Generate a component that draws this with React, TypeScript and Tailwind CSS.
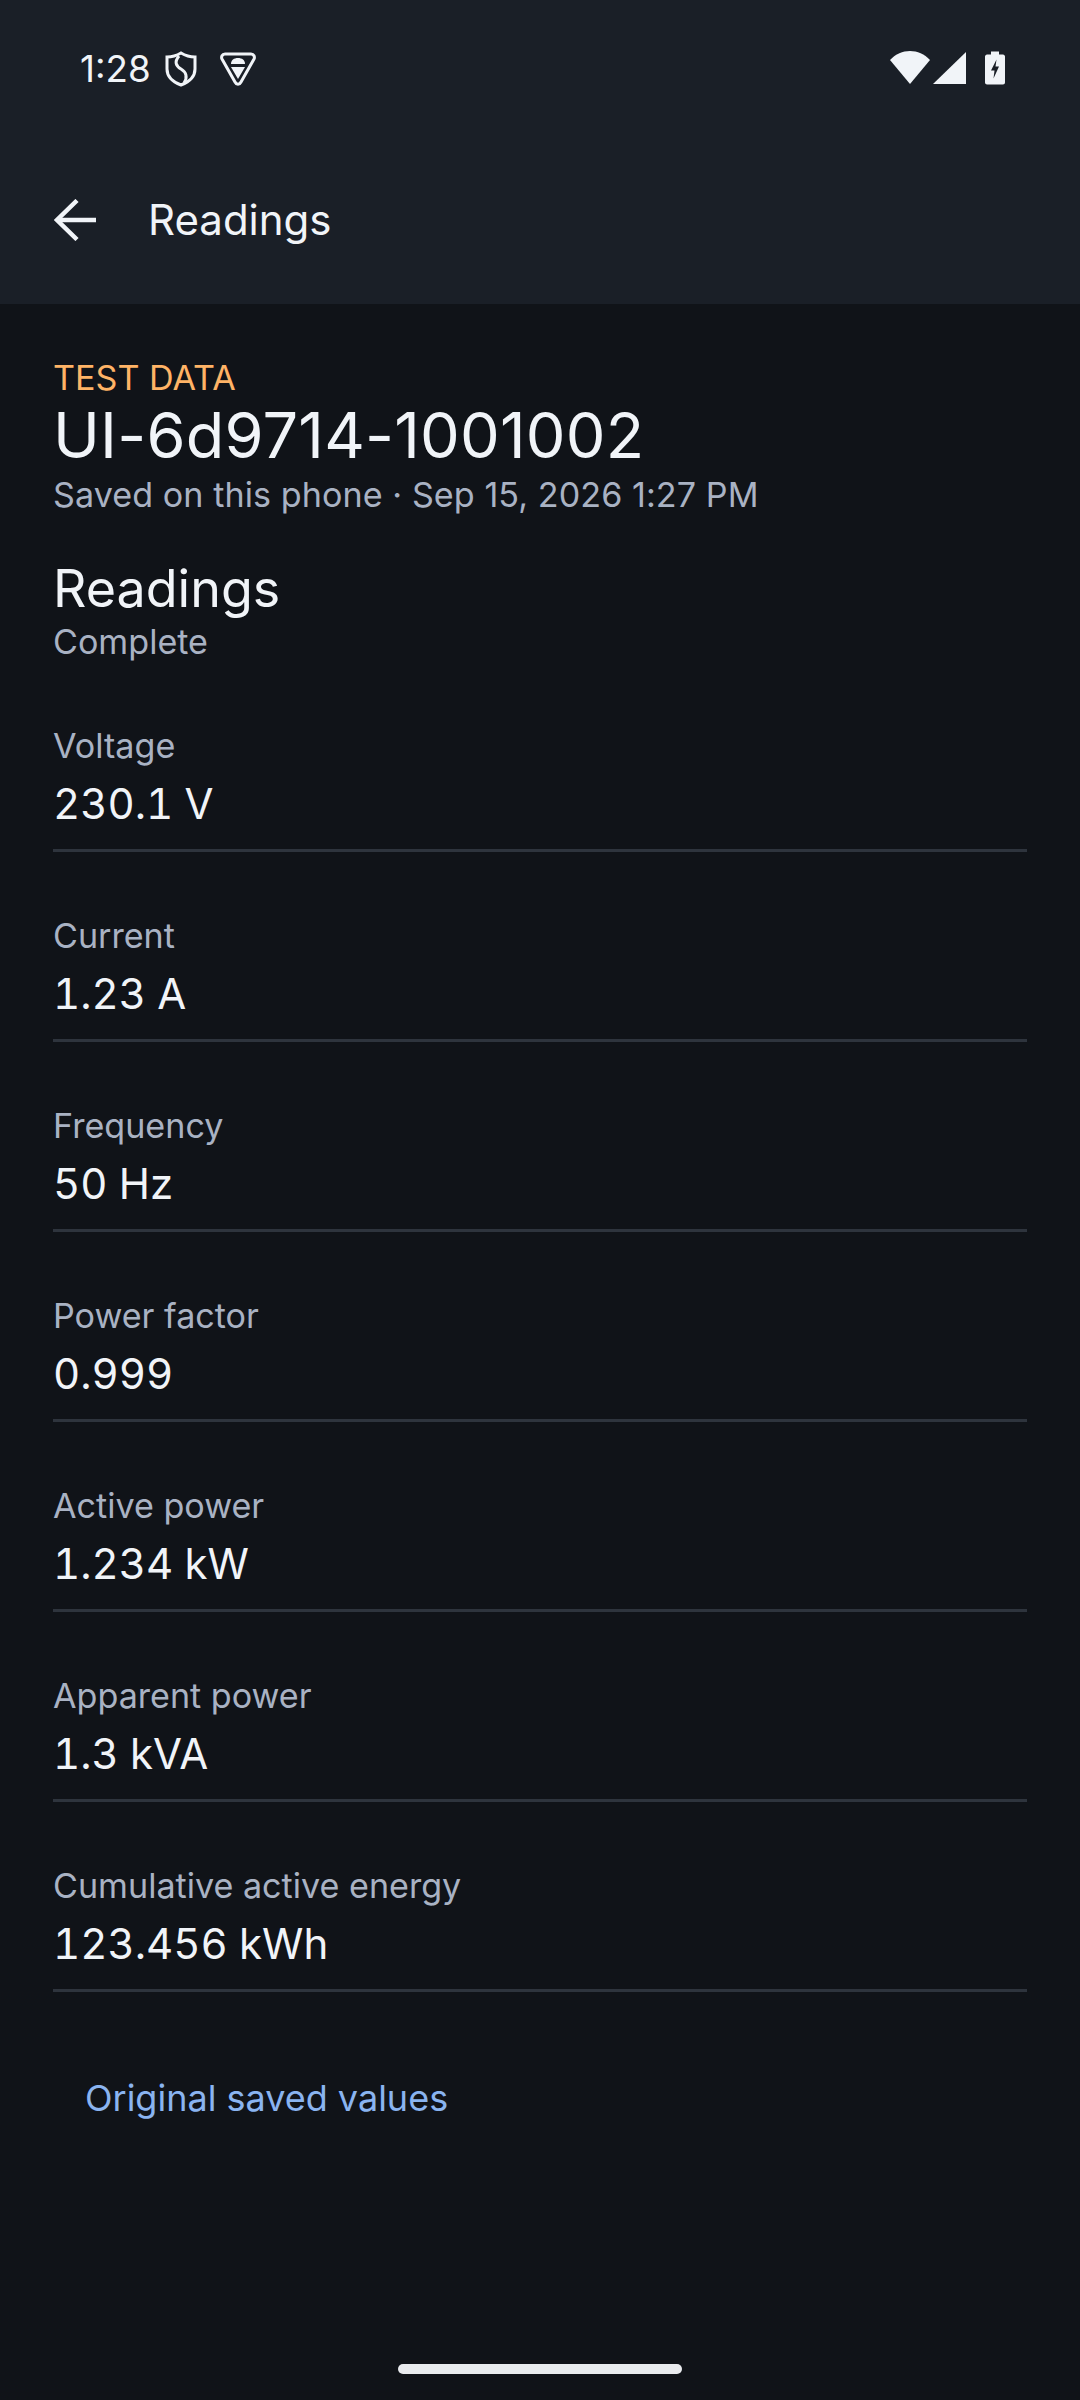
const readings = [
  { label: "Voltage", value: "230.1", unit: "V" },
  { label: "Current", value: "1.23", unit: "A" },
  { label: "Frequency", value: "50", unit: "Hz" },
  { label: "Power factor", value: "0.999", unit: "" },
  { label: "Active power", value: "1.234", unit: "kW" },
  { label: "Apparent power", value: "1.3", unit: "kVA" },
  { label: "Cumulative active energy", value: "123.456", unit: "kWh" },
]

function StatusBar() {
  return (
    <div className="h-[132px] pl-[80px] pr-[75px] pt-[47px] flex items-start justify-between">
      <div className="flex items-center">
        <span className="text-[36.75px] leading-[44px] text-[#f1f4f8]">1:28</span>
        <svg className="ml-[14px] w-[32px] h-[36px]" viewBox="0 0 32 36" fill="none" stroke="#f1f4f8" strokeWidth="3">
          <path d="M16 2 C21 5 26 6 30 6 V18 C30 26 24 31 16 34 C8 31 2 26 2 18 V6 C6 6 11 5 16 2 Z" />
          <path d="M14 5 C9 11 11 15 16 18 C21 21 23 26 19 32" />
        </svg>
        <svg className="ml-[23px] w-[36px] h-[34px]" viewBox="0 0 36 34" fill="none">
          <path d="M5 2 H31 C34 2 35 5 34 7 L21 30 C19.500 33 16.500 33 15 30 L2 7 C1 5 2 2 5 2 Z" stroke="#f1f4f8" strokeWidth="3" />
          <path d="M11 12 C11 8 14 6 18 6 C22 6 25 8 25 12 Z" fill="#f1f4f8" />
          <path d="M11 15 H25 L18 27 Z" fill="#f1f4f8" />
        </svg>
      </div>
      <div className="flex items-start pt-[4px]">
        <svg className="w-[40px] h-[33px]" viewBox="0 0 40 33">
          <path d="M0 9 C11 -3 29 -3 40 9 L20 33 Z" fill="#f1f4f8" />
        </svg>
        <svg className="ml-[3px] w-[33px] h-[32px] mt-[1px]" viewBox="0 0 33 32">
          <path d="M33 0 V32 H0 Z" fill="#f1f4f8" />
        </svg>
        <svg className="ml-[19px] w-[20px] h-[34px]" viewBox="0 0 20 33">
          <path d="M6 0 H14 V3 H18 C19 3 20 4 20 5 V31 C20 32 19 33 18 33 H2 C1 33 0 32 0 31 V5 C0 4 1 3 2 3 H6 Z" fill="#f1f4f8" />
          <path d="M11.500 8 L6 19 H9.500 L8.500 27 L14 15 H10.500 Z" fill="#1a1f27" />
        </svg>
      </div>
    </div>
  )
}

export default function App() {
  return (
    <div className="w-[1080px] h-[2400px] bg-[#101318] flex flex-col relative" style={{ fontFamily: "Inter, sans-serif" }}>
      <header className="bg-[#1a1f27] h-[304px] shrink-0">
        <StatusBar />
        <div className="flex items-center h-[176px]">
          <svg className="ml-[54px] w-[42px] h-[42px]" viewBox="0 0 42 42" fill="none" stroke="#f1f4f8" strokeWidth="4.500">
            <path d="M44 21 H3" />
            <path d="M23 1.500 L3 21 L23 40.500" />
          </svg>
          <span className="ml-[52px] text-[42px] leading-[56px] text-[#f1f4f8]">Readings</span>
        </div>
      </header>

      <main className="px-[53px] pt-[54px] flex flex-col">
        <div className="text-[34.125px] leading-[40px] text-[#ffb366]">TEST DATA</div>
        <div className="-mt-[1px] text-[63px] leading-[76px] tracking-[0.2px] text-[#f1f4f8]">UI-6d9714-1001002</div>
        <div className="text-[34.125px] leading-[44px] tracking-[0.07px] text-[#a9b2c3]">Saved on this phone · Sep 15, 2026 1:27 PM</div>

        <div className="mt-[40px] text-[52px] leading-[64px] text-[#f1f4f8]">Readings</div>
        <div className="-mt-[1px] text-[34.125px] leading-[44px] text-[#a9b2c3]">Complete</div>

        <div className="mt-[58px] flex flex-col gap-[60px]">
          {readings.map((r) => (
            <div key={r.label} className="h-[130px] pt-[2px] border-b-[3px] border-[#2e343d]">
              <div className="text-[34.125px] leading-[44px] text-[#a9b2c3]">{r.label}</div>
              <div className="mt-[8px] text-[42px] leading-[56px] tabular-nums text-[#f1f4f8]">
                <span className="inline-block">{r.value}</span> <span className="inline-block">{r.unit}</span>
              </div>
            </div>
          ))}
        </div>

        <div className="mt-[82px] pl-[32px] text-[36px] leading-[48px] text-[#8ab4f0]">Original saved values</div>
      </main>

      <div className="absolute left-[398px] top-[2364px] w-[284px] h-[10px] rounded-full bg-[#e9ebee]" />
    </div>
  )
}
